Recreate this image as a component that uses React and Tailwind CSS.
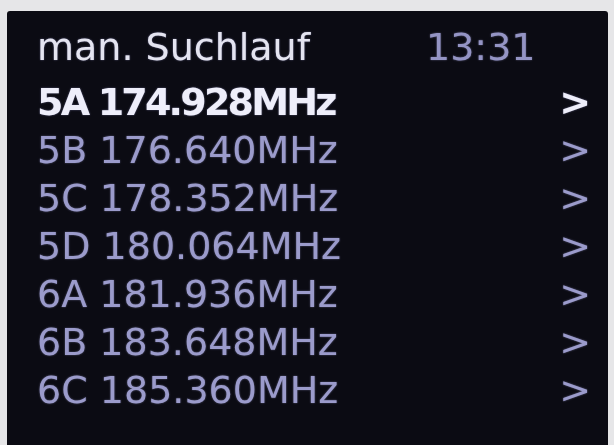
import React from 'react';

const channels = [
  { id: '5A', freq: '174.928MHz', selected: true },
  { id: '5B', freq: '176.640MHz' },
  { id: '5C', freq: '178.352MHz' },
  { id: '5D', freq: '180.064MHz' },
  { id: '6A', freq: '181.936MHz' },
  { id: '6B', freq: '183.648MHz' },
  { id: '6C', freq: '185.360MHz' },
];

const ChannelRow = ({ channel }) => {
  return (
    <li
      className={`flex items-center justify-between h-[48px] leading-[48px] ${
        channel.selected
          ? 'text-[#eeeefa] font-bold tracking-[-2.8px]'
          : 'text-[#9b9bcb]'
      }`}
    >
      <span>
        {channel.id} {channel.freq}
      </span>
      <span className="tracking-normal">&gt;</span>
    </li>
  );
};

const App = () => {
  return (
    <div className="w-[614px] h-[445px] overflow-hidden bg-[#e6e6e8] pl-[7px] pt-[11px]">
      <div
        className="w-[601px] h-[440px] bg-[#0b0b13] rounded-tl-[3px] rounded-tr-[3px] pl-[30px] pr-[17px] pt-[12px] text-[38px] blur-[0.6px] [text-shadow:0_0_2px_rgba(190,190,255,0.45)]"
        style={{ fontFamily: '"DejaVu Sans", sans-serif' }}
      >
        {/* Header */}
        <div className="flex items-center h-[48px] leading-[48px]">
          <span className="w-[389px] text-[#e4e4f0]">man. Suchlauf</span>
          <span className="text-[#9494c4]">13:31</span>
        </div>

        {/* Channel list */}
        <ul className="mt-[7px]">
          {channels.map((channel) => (
            <ChannelRow key={channel.id} channel={channel} />
          ))}
        </ul>
      </div>
    </div>
  );
};

export default App;
